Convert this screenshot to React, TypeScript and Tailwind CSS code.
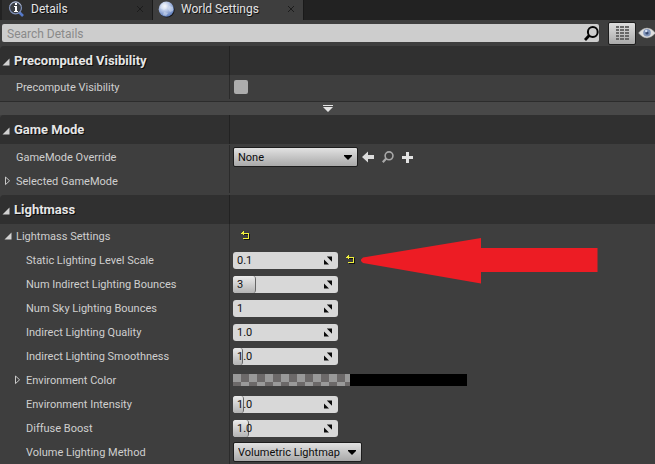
import type { ReactNode } from "react";

function OpenTriangle() {
  return (
    <svg width="8" height="8" viewBox="0 0 8 8" aria-hidden="true">
      <path d="M7.5 0.5V7.5H0.5Z" fill="#d2d2d2" />
    </svg>
  );
}

function ClosedTriangle() {
  return (
    <svg width="7" height="10" viewBox="0 0 7 10" aria-hidden="true">
      <path d="M1.5 1V8.6L5.6 4.8Z" fill="none" stroke="#c8c8c8" />
    </svg>
  );
}

function ResetButton({ label }: { label: string }) {
  return (
    <button aria-label={label} className="block">
      <svg width="10" height="10" viewBox="0 0 10 10" aria-hidden="true">
        <path d="M3 3H7V4H3ZM8 3H9V9H3V8H8Z" fill="#111" />
        <path d="M0 2H1V1H2V0H3V2H8V8H2V7H7V3H3V4H2V3H0Z" fill="#f0f03c" />
      </svg>
    </button>
  );
}

function Magnifier({ size, color, weight }: { size: number; color: string; weight: number }) {
  return (
    <svg width={size} height={size} viewBox="0 0 15 15" fill="none" stroke={color} strokeWidth={weight} aria-hidden="true">
      <circle cx="8.8" cy="6" r="4.9" />
      <path d="M5.2 9.5L1 14" strokeWidth={weight + 0.8} />
    </svg>
  );
}

function Tab({ active, icon, title }: { active?: boolean; icon: ReactNode; title: string }) {
  return (
    <div className={`flex h-5 w-[151px] items-center border-r border-[#1a1a1a] pb-0.5 pl-[5px] pr-2 ${active ? "bg-[#3e3e3e]" : "bg-[#2e2e2e]"}`}>
      <button role="tab" aria-selected={!!active} className="flex flex-1 items-center gap-1.5 text-[12px] leading-4 text-[#e4e4e4] [text-shadow:1px_1px_0_#111]">
        {icon}
        {title}
      </button>
      <button aria-label={`Close ${title}`} className="block">
        <svg width="8" height="8" viewBox="0 0 8 8" stroke="#1c1c1c" aria-hidden="true">
          <path d="M1 1L7 7M7 1L1 7" />
        </svg>
      </button>
    </div>
  );
}

function Section({ title, children }: { title: string; children: ReactNode }) {
  return (
    <section>
      <div className="flex h-[29px] rounded-tl bg-[#303030]">
        <h2 className="w-[230px] shrink-0 border-r border-[#222]">
          <button className="flex h-full w-full items-center gap-1 pl-0.5 text-[13px] font-bold leading-4 text-[#e6e6e6] [text-shadow:1px_1px_0_#0c0c0c]">
            <span className="pt-0.5"><OpenTriangle /></span>
            {title}
          </button>
        </h2>
      </div>
      {children}
    </section>
  );
}

type RowProps = {
  label: string;
  id?: string;
  nested?: boolean;
  toggle?: "open" | "closed";
  children?: ReactNode;
};

function Row({ label, id, nested, toggle, children }: RowProps) {
  return (
    <div className="flex h-6">
      <div className={`flex w-[230px] shrink-0 items-center border-r border-[#2b2b2b] ${nested ? "pl-[14px]" : "pl-1"}`}>
        <span className="w-3 shrink-0">
          {toggle && (
            <button aria-label={`Toggle ${label}`} className="block">
              {toggle === "open" ? <OpenTriangle /> : <ClosedTriangle />}
            </button>
          )}
        </span>
        <label htmlFor={id} className="whitespace-nowrap pt-0.5 text-[#cfcfcf]">{label}</label>
      </div>
      <div className="relative flex min-w-0 flex-1 items-center pl-[3px]">{children}</div>
    </div>
  );
}

function NumberBox({ id, value, fill = 0 }: { id: string; value: string; fill?: number }) {
  return (
    <div className="relative h-[17px] w-[105px] overflow-hidden rounded-[3px] bg-[#d8d8d8]">
      {fill > 0 && (
        <div
          className="absolute inset-y-0 left-0 rounded-r-[3px] border-r border-[#666] bg-linear-to-b from-[#ececec] to-[#b4b4b4]"
          style={{ width: fill }}
        />
      )}
      <input id={id} defaultValue={value} className="absolute inset-0 w-full bg-transparent pl-1 pt-px text-[11px] leading-4 text-[#111] outline-none" />
      <svg className="absolute right-1.5 top-1" width="8" height="9" viewBox="0 0 8 9" aria-hidden="true">
        <path d="M2.8 0.5H8V5.7ZM0 3.5V8.5H5Z" fill="#0a0a0a" />
      </svg>
    </div>
  );
}

function Dropdown({ id, value, className }: { id: string; value: string; className: string }) {
  return (
    <div className={`relative ${className}`}>
      <select id={id} className="block h-5 w-full appearance-none rounded-[2px] border border-[#1d1d1d] bg-linear-to-b from-[#e2e2e2] to-[#a9a9a9] pl-1 pt-0.5 text-[11px] leading-4 text-[#0c0c0c] outline-none">
        <option>{value}</option>
      </select>
      <svg className="pointer-events-none absolute right-1.5 top-2" width="8" height="5" viewBox="0 0 8 5" aria-hidden="true">
        <path d="M0 0H8V1L4 5L0 1Z" fill="#000" />
      </svg>
    </div>
  );
}

function InfoIcon() {
  return (
    <svg width="18" height="18" viewBox="0 0 18 18" aria-hidden="true">
      <path d="M11.5 11.5L16 16" stroke="#5579c9" strokeWidth="2.6" />
      <circle cx="8.5" cy="7.8" r="6" fill="#3a3e44" stroke="#7f90b8" strokeWidth="1.2" />
      <path d="M3 5.5A6 6 0 0 1 14 5.5" fill="none" stroke="#aeb6c6" />
      <path d="M8 3H10V5H8ZM7 6H10V11H11V12H7V11H8V7H7Z" fill="#fff" />
    </svg>
  );
}

function GlobeIcon() {
  return (
    <svg width="17" height="17" viewBox="0 0 17 17" aria-hidden="true">
      <defs>
        <radialGradient id="globe" cx="40%" cy="30%" r="72%">
          <stop offset="0" stopColor="#fff" />
          <stop offset="0.45" stopColor="#b6c6e6" />
          <stop offset="1" stopColor="#5878b8" />
        </radialGradient>
      </defs>
      <circle cx="9" cy="9" r="7.6" fill="#151515" />
      <circle cx="8.3" cy="8.2" r="7.6" fill="url(#globe)" />
      <path d="M4 3L8 2L7 5L9 7L6 9L2 7ZM11 5L15 6L15 10L12 11L10 8ZM6 11L10 12L8 15L5 14Z" fill="#e8effb" opacity="0.4" />
    </svg>
  );
}

function EyeIcon() {
  return (
    <svg width="18" height="12" viewBox="0 0 18 12" aria-hidden="true">
      <path d="M0.5 6Q4.5 1 9 1T17.5 6Q13.5 11 9 11T0.5 6Z" fill="#dedede" stroke="#999" strokeWidth="0.5" />
      <circle cx="9" cy="5.7" r="3.8" fill="#8195ba" />
      <circle cx="9" cy="6" r="1.6" fill="#36486f" />
      <circle cx="8.2" cy="4" r="1.2" fill="#d5e0f5" />
    </svg>
  );
}

function ListIcon() {
  return (
    <svg width="13" height="14" viewBox="0 0 13 14" aria-hidden="true">
      <path d="M0 1H13M0 4H13M0 7H13M0 10H13M0 13H13" stroke="#686868" strokeWidth="2" strokeDasharray="3 1 4 1 4 1" />
    </svg>
  );
}

export default function App() {
  return (
    <main className="overflow-hidden bg-[#3e3e3e] font-['Roboto','Liberation_Sans',sans-serif] text-[11px] leading-4">
      <div role="tablist" className="flex bg-[#222] pl-0.5">
        <Tab icon={<InfoIcon />} title="Details" />
        <Tab active icon={<GlobeIcon />} title="World Settings" />
      </div>

      <div className="flex h-[26px] items-center pl-0.5">
        <div className="relative min-w-0 flex-1">
          <input
            aria-label="Search Details"
            placeholder="Search Details"
            className="block h-[18px] w-full rounded-[2px] bg-[#cdcdcd] pl-[5px] pt-px text-[12px] leading-4 text-[#222] outline-none placeholder:text-[#8a8a8a]"
          />
          <span className="pointer-events-none absolute right-0 top-0.5"><Magnifier size={15} color="#050505" weight={2} /></span>
        </div>
        <button aria-label="Property matrix" className="ml-[9px] flex h-[23px] w-7 shrink-0 items-center justify-center rounded-[2px] border border-[#1d1d1d] bg-linear-to-b from-[#dedede] to-[#aaa]">
          <ListIcon />
        </button>
        <button aria-label="View options" className="ml-0.5 w-[17px] shrink-0 overflow-hidden">
          <EyeIcon />
        </button>
      </div>

      <Section title="Precomputed Visibility">
        <Row label="Precompute Visibility" id="precompute">
          <input id="precompute" type="checkbox" className="ml-px size-3.5 appearance-none rounded-[2px] bg-[#acacac]" />
        </Row>
        <button aria-label="Show advanced" className="mt-0.5 flex h-[14px] w-full items-center justify-center border-t border-[#2c2c2c] bg-[#484848]">
          <svg width="10" height="7" viewBox="0 0 10 7" aria-hidden="true">
            <path d="M0 0H10V1H0ZM0 2H10L5 7Z" fill="#e4e4e4" />
          </svg>
        </button>
      </Section>

      <Section title="Game Mode">
        <div className="pt-px">
          <Row label="GameMode Override" id="gamemode">
            <Dropdown id="gamemode" value="None" className="w-[125px]" />
            <div className="flex items-center gap-2 pl-1">
              <button aria-label="Use selected">
                <svg width="12" height="12" viewBox="0 0 12 12" aria-hidden="true">
                  <path d="M0 6L6 0.5V4H12V8H6V11.5Z" fill="#dcdcdc" />
                </svg>
              </button>
              <button aria-label="Browse"><Magnifier size={12} color="#a8a8a8" weight={2} /></button>
              <button aria-label="Create new">
                <svg width="11" height="11" viewBox="0 0 11 11" aria-hidden="true">
                  <path d="M5.5 0V11M0 5.5H11" stroke="#e2e2e2" strokeWidth="3" />
                </svg>
              </button>
            </div>
          </Row>
          <Row label="Selected GameMode" toggle="closed" />
        </div>
      </Section>

      <div className="pt-0.5">
        <Section title="Lightmass">
          <Row label="Lightmass Settings" toggle="open">
            <div className="pl-2"><ResetButton label="Reset Lightmass Settings" /></div>
          </Row>
          <Row label="Static Lighting Level Scale" id="scale" nested>
            <NumberBox id="scale" value="0.1" />
            <div className="pl-2"><ResetButton label="Reset Static Lighting Level Scale" /></div>
            <svg className="absolute -top-2.5 left-[131px]" width="237" height="46" viewBox="0 0 237 46" aria-hidden="true">
              <path d="M0 21.5L2 19.5L120 0V10H236.5V34H120V45.5L2 25L0 23Z" fill="#ed1c24" />
            </svg>
          </Row>
          <Row label="Num Indirect Lighting Bounces" id="indirect" nested>
            <NumberBox id="indirect" value="3" fill={23} />
          </Row>
          <Row label="Num Sky Lighting Bounces" id="sky" nested>
            <NumberBox id="sky" value="1" />
          </Row>
          <Row label="Indirect Lighting Quality" id="quality" nested>
            <NumberBox id="quality" value="1.0" />
          </Row>
          <Row label="Indirect Lighting Smoothness" id="smoothness" nested>
            <NumberBox id="smoothness" value="1.0" fill={10} />
          </Row>
          <Row label="Environment Color" nested toggle="closed">
            <button aria-label="Environment Color" className="flex h-3 w-[234px]">
              <span className="h-full flex-1 bg-[repeating-conic-gradient(#6c6969_0%_25%,#999_0%_50%)] bg-size-[16px_16px]" />
              <span className="h-full flex-1 bg-black" />
            </button>
          </Row>
          <Row label="Environment Intensity" id="intensity" nested>
            <NumberBox id="intensity" value="1.0" fill={11} />
          </Row>
          <Row label="Diffuse Boost" id="boost" nested>
            <NumberBox id="boost" value="1.0" fill={16} />
          </Row>
          <Row label="Volume Lighting Method" id="method" nested>
            <Dropdown id="method" value="Volumetric Lightmap" className="w-[129px]" />
          </Row>
        </Section>
      </div>
    </main>
  );
}
